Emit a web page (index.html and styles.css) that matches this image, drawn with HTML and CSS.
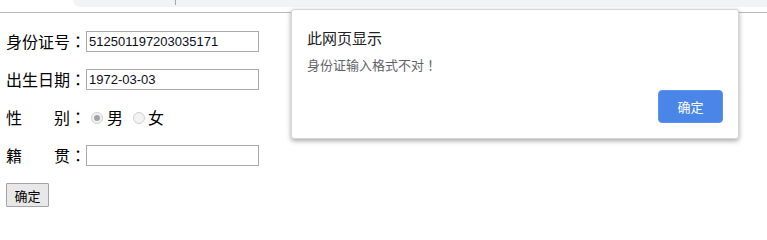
FILE: index.html
```html
<!DOCTYPE html>
<html lang="zh">
<head>
<meta charset="utf-8">
<title>表单</title>
<link rel="stylesheet" href="styles.css">
</head>
<body>
<div class="chrome">
  <div class="omnibox"><span class="sep"></span></div>
</div>
<form class="form">
  <div class="row">
    <span class="label">身份证号<span class="punct" lang="ja">：</span></span>
    <input class="field" type="text" value="512501197203035171">
  </div>
  <div class="row">
    <span class="label">出生日期<span class="punct" lang="ja">：</span></span>
    <input class="field" type="text" value="1972-03-03">
  </div>
  <div class="row">
    <span class="label spread"><span>性</span><span>别<span class="punct" lang="ja">：</span></span></span>
    <input class="radio first" type="radio" name="sex" checked disabled><span class="opt">男</span>
    <input class="radio second" type="radio" name="sex" disabled><span class="opt opt2">女</span>
  </div>
  <div class="row">
    <span class="label spread"><span>籍</span><span>贯<span class="punct" lang="ja">：</span></span></span>
    <input class="field" type="text" value="">
  </div>
  <div class="btnrow">
    <button class="submit" type="button">确定</button>
  </div>
</form>
<div class="dialog">
  <div class="dlg-title">此网页显示</div>
  <div class="dlg-msg">身份证输入格式不对<span class="punct" lang="ja">！</span></div>
  <div class="dlg-actions">
    <button class="dlg-ok" type="button">确定</button>
  </div>
</div>
</body>
</html>
```
FILE: styles.css
```css
html, body {
  margin: 0;
  padding: 0;
  background: #fff;
}
body {
  width: 767px;
  height: 221px;
  overflow: hidden;
  font-family: "Noto Sans CJK SC", "Liberation Sans", sans-serif;
  color: #000;
}
.punct {
  font-family: "Noto Sans CJK JP", "Noto Sans CJK SC", sans-serif;
}
.chrome {
  height: 12px;
  border-bottom: 1px solid #b9b9b9;
}
.omnibox {
  margin-left: 73px;
  height: 7px;
  background: #f1f3f4;
  border-bottom-left-radius: 7px;
  display: flex;
  align-items: flex-start;
  padding-left: 102px;
}
.sep {
  width: 1px;
  height: 5px;
  background: #a5a7aa;
}
.form {
  padding: 18px 6px 0;
  display: flex;
  flex-direction: column;
  gap: 17px;
}
.row {
  display: flex;
  align-items: center;
  height: 21px;
  font-size: 16px;
  line-height: 21px;
}
.label {
  width: 80px;
  flex: none;
  white-space: nowrap;
}
.spread {
  display: flex;
  justify-content: space-between;
}
.field {
  width: 173px;
  height: 21px;
  box-sizing: border-box;
  margin: 0;
  border: 1px solid #a9a9a9;
  padding: 0 2px;
  font-family: "Liberation Sans", Arial, sans-serif;
  font-size: 13px;
  color: #0c0c20;
  outline: none;
}
.radio {
  -webkit-appearance: none;
  appearance: none;
  width: 12px;
  height: 12px;
  margin: 0;
  border: 1px solid #cfcfcf;
  border-radius: 50%;
  background: #f3f3f3;
  box-sizing: border-box;
  position: relative;
}
.radio:checked::after {
  content: "";
  position: absolute;
  left: 2px;
  top: 2px;
  width: 6px;
  height: 6px;
  border-radius: 50%;
  background: #a3a3a3;
}
.first { margin-left: 5px; }
.second { margin-left: 10px; }
.opt { margin-left: 4px; }
.opt2 { margin-left: 3px; }
.btnrow {
  display: flex;
}
.submit {
  width: 43px;
  height: 24px;
  margin: 0;
  padding: 0;
  border: 1px solid #a3a3a3;
  border-radius: 1px;
  background: #e8e8e8;
  font-family: "Noto Sans CJK SC", sans-serif;
  font-size: 13px;
  color: #000;
}
.dialog {
  position: absolute;
  left: 291px;
  top: 9px;
  width: 448px;
  height: 130px;
  box-sizing: border-box;
  background: #fff;
  border: 1px solid #d6d6d6;
  border-radius: 3px;
  box-shadow: 0 2px 5px rgba(0, 0, 0, 0.35);
  padding: 19px 15px 15px 15px;
  display: flex;
  flex-direction: column;
}
.dlg-title {
  font-size: 15px;
  line-height: 18px;
  color: #202124;
}
.dlg-msg {
  margin-top: 10px;
  font-size: 13px;
  line-height: 16px;
  color: #5f6368;
}
.dlg-actions {
  margin-top: auto;
  display: flex;
  justify-content: flex-end;
}
.dlg-ok {
  width: 65px;
  height: 33px;
  margin: 0;
  padding: 0;
  border: 1px solid #5b93ec;
  border-radius: 4px;
  background: #4a86e8;
  color: #fff;
  font-family: "Noto Sans CJK SC", sans-serif;
  font-size: 13px;
}
```
